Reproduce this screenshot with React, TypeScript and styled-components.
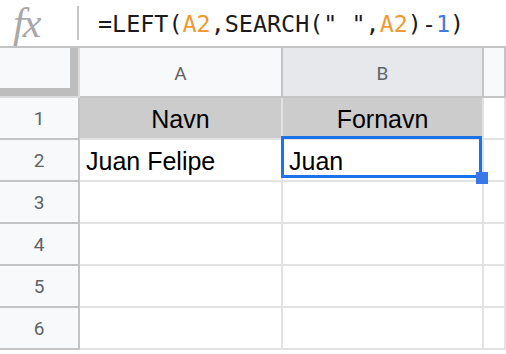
import React from 'react'
import styled, { createGlobalStyle } from 'styled-components'

const GlobalStyle = createGlobalStyle`
    html, body {
        margin: 0;
        padding: 0;
        background: #ffffff;
        overflow: hidden;
    }
    * {
        box-sizing: border-box;
    }
`;

const Sheet = styled.div`
    width: 506px;
    height: 354px;
    overflow: hidden;
    background: #ffffff;
    font-family: "Liberation Sans", Arial, sans-serif;
`;

const FormulaBar = styled.div`
    display: flex;
    align-items: center;
    height: 48px;
    border-bottom: 2px solid #c4c4c4;
`;

const FxLabel = styled.div`
    width: 77px;
    height: 46px;
    display: flex;
    align-items: center;
    padding-left: 13px;
    font-family: "Liberation Serif", "Times New Roman", serif;
    font-style: italic;
    font-size: 42px;
    line-height: 46px;
    color: #a8a8a8;
    letter-spacing: -2px;
`;

const Divider = styled.div`
    width: 2px;
    height: 34px;
    background: #c6c6c6;
`;

const Formula = styled.div`
    padding-left: 19px;
    padding-top: 2px;
    font-family: "DejaVu Sans Mono", "Liberation Mono", monospace;
    font-size: 23.4px;
    color: #1b1b1b;
    white-space: pre;
`;

const Ref = styled.span<{ $kind: 'range' | 'number' }>`
    color: ${(p) => (p.$kind === 'range' ? '#ef9a34' : '#3f7be0')};
`;

const Grid = styled.div`
    display: grid;
    grid-template-columns: 80px 203px 201px 1fr;
    grid-template-rows: 50px repeat(6, 42px);
`;

const Corner = styled.div`
    background: #f8f9fa;
    border-right: 2px solid #dcdcdc;
    border-bottom: 2px solid #dcdcdc;
    box-shadow: inset -8px -8px 0 #bdbdbd;
`;

const ColHeader = styled.div<{ $active?: boolean }>`
    display: flex;
    align-items: center;
    justify-content: center;
    background: ${(p) => (p.$active ? '#e6e8eb' : '#f8f9fa')};
    border-right: 2px solid #c4c4c4;
    border-bottom: 2px solid #c4c4c4;
    font-family: Roboto, "Liberation Sans", sans-serif;
    font-size: 19px;
    color: #5f6368;
    padding-top: 2px;
`;

const RowHeader = styled.div`
    display: flex;
    align-items: center;
    justify-content: center;
    background: #f8f9fa;
    border-right: 2px solid #c4c4c4;
    border-bottom: 2px solid #c4c4c4;
    font-family: Roboto, "Liberation Sans", sans-serif;
    font-size: 19px;
    color: #5f6368;
`;

const Cell = styled.div<{ $center?: boolean; $fill?: boolean }>`
    position: relative;
    display: flex;
    align-items: flex-end;
    justify-content: ${(p) => (p.$center ? 'center' : 'flex-start')};
    padding: 0 6px 4px 6px;
    background: ${(p) => (p.$fill ? '#cccccc' : '#ffffff')};
    border-right: 2px solid #e2e2e2;
    border-bottom: 2px solid #e2e2e2;
    font-size: 25px;
    line-height: 29px;
    color: #000000;
    white-space: nowrap;
`;

const Selection = styled.div`
    position: absolute;
    z-index: 2;
    top: -4px;
    left: -2px;
    right: 0;
    bottom: 2px;
    border: 3px solid #1a73e8;
    pointer-events: none;
`;

const FillHandle = styled.div`
    position: absolute;
    right: -9px;
    bottom: -9px;
    width: 12px;
    height: 12px;
    background: #3b78e7;
`;

const rows: { n: number; a: string; b: string; fill?: boolean }[] = [
    { n: 1, a: 'Navn', b: 'Fornavn', fill: true },
    { n: 2, a: 'Juan Felipe', b: 'Juan' },
    { n: 3, a: '', b: '' },
    { n: 4, a: '', b: '' },
    { n: 5, a: '', b: '' },
    { n: 6, a: '', b: '' },
];

export default function App() {
    return (
        <Sheet>
            <GlobalStyle />
            <FormulaBar>
                <FxLabel>fx</FxLabel>
                <Divider />
                <Formula>
                    =LEFT(<Ref $kind="range">A2</Ref>,SEARCH(" ",<Ref $kind="range">A2</Ref>)-<Ref $kind="number">1</Ref>)
                </Formula>
            </FormulaBar>
            <Grid>
                <Corner />
                <ColHeader>A</ColHeader>
                <ColHeader $active>B</ColHeader>
                <ColHeader />
                {rows.map((r) => (
                    <React.Fragment key={r.n}>
                        <RowHeader>{r.n}</RowHeader>
                        <Cell $center={r.fill} $fill={r.fill}>{r.a}</Cell>
                        <Cell $center={r.fill} $fill={r.fill}>
                            {r.b}
                            {r.n === 2 && (
                                <Selection>
                                    <FillHandle />
                                </Selection>
                            )}
                        </Cell>
                        <Cell />
                    </React.Fragment>
                ))}
            </Grid>
        </Sheet>
    );
}
